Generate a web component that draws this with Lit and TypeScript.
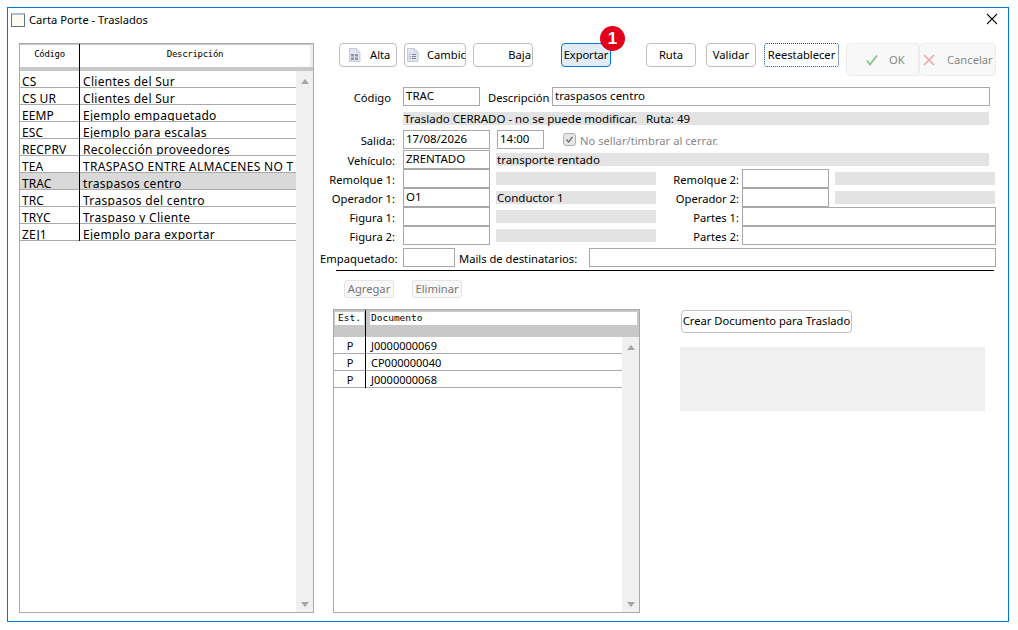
import { LitElement, html, css, svg } from "lit";
import { customElement } from "lit/decorators.js";

const LEFT_ROWS = [
  ["CS", "Clientes del Sur"],
  ["CS UR", "Clientes del Sur"],
  ["EEMP", "Ejemplo empaquetado"],
  ["ESC", "Ejemplo para escalas"],
  ["RECPRV", "Recolección proveedores"],
  ["TEA", "TRASPASO ENTRE ALMACENES NO T"],
  ["TRAC", "traspasos centro"],
  ["TRC", "Traspasos del centro"],
  ["TRYC", "Traspaso y Cliente"],
  ["ZEJ1", "Ejemplo para exportar"],
];
const DOCS = ["J0000000069", "CP000000040", "J0000000068"];

const docIcon = (lines: boolean) => html`<svg class="ic" width="15" height="16" viewBox="0 0 15 16">
  <path d="M2.5 1.5h7l3.5 3.5v9.500h-10.500z" fill="#dfe6f2" stroke="#c3cbdc"/>
  <path d="M9.500 1.500v3.500h3.500z" fill="#f6f8fc" stroke="#c3cbdc"/>
  ${lines
    ? svg`<path d="M4.500 7.500h1M4.500 9.500h1M4.500 11.500h1M7 7.500h4M7 9.500h4M7 11.500h4" stroke="#7d8594"/>`
    : svg`<path d="M4 7h3v2.500h-3zM8 7h3v2.500h-3zM4 10.500h3v2.500h-3zM8 10.500h3v2.500h-3z" fill="#8d93a0"/>`}
</svg>`;

@customElement("app-root")
export class AppRoot extends LitElement {
  static styles = css`
    :host { display: block; width: 1018px; height: 630px; background: #fff; overflow: hidden;
      font: 11.2px/16px "Noto Sans", Tahoma, sans-serif; color: #000; }
    * { box-sizing: border-box; }
    .win { margin: 7px 0 0 7px; width: 1002px; height: 615px; border: 1px solid #0078d4; display: flex; flex-direction: column; background: #fff; }
    .title { height: 24px; display: flex; align-items: center; padding: 0 10px 0 3px; flex: none; }
    .title .winic { width: 14px; height: 14px; border: 1px solid #5e7385; background: #fdfaf0; border-top: 2px solid #a9c0d8; margin-right: 4px; }
    .title .text { flex: 1; }
    .title svg { margin-bottom: 2px; }
    .body { flex: 1; display: flex; padding: 11px 0 0 11px; min-height: 0; }

    .tbl { border: 1px solid #aaa; background: #fff; display: flex; flex-direction: column; position: relative; overflow: hidden; }
    .tbl.left { width: 295px; height: 570px; flex: none; }
    .head { display: flex; font: 9px/14px "DejaVu Sans Mono", "Liberation Mono", monospace; flex: none; }
    .left .head { height: 23px; background: #fff; border-top: 1px solid #c8c8c8; border-right: 3px solid #eee; padding-top: 2px; letter-spacing: -0.3px; }
    .left .hc1 { width: 59px; text-align: center; }
    .left .hc2 { flex: 1; text-align: center; padding-left: 1px; }
    .left .sep { height: 4px; background: #c8c8c8; flex: none; }
    .vline { position: absolute; top: 0; width: 1px; background: #000; }
    .left .vline { left: 59px; height: 197px; }
    .rows { flex: 1; display: flex; min-height: 0; }
    .list { flex: 1; min-width: 0; }
    .row { display: flex; height: 17px; border-bottom: 1px solid #aaa; white-space: nowrap; overflow: hidden; }
    .row.sel { background: #d9d9d9; }
    .left .row { font-size: 12px; line-height: 11px; letter-spacing: 0.3px; padding-top: 5px; }
    .left .c1 { width: 60px; padding-left: 2px; flex: none; letter-spacing: 0.1px; }
    .left .c2 { flex: 1; padding-left: 3px; overflow: hidden; }
    .sb { width: 17px; background: #f0f0f0; flex: none; display: flex; flex-direction: column; justify-content: space-between; align-items: center; padding: 8px 0 5px; }
    .up { width: 0; height: 0; border: 4px solid transparent; border-top: 0; border-bottom: 5px solid #a6a6a6; }
    .down { width: 0; height: 0; border: 4px solid transparent; border-bottom: 0; border-top: 5px solid #a6a6a6; }

    .right { width: 677px; margin-left: 6px; flex: none; display: flex; flex-direction: column; }

    .bar { display: flex; height: 33px; padding-left: 19px; flex: none; align-items: flex-start; }
    .btn { height: 24px; border: 1px solid #bfbfbf; border-radius: 4px; background: #fff; display: flex; align-items: center; justify-content: center; white-space: nowrap; overflow: hidden; flex: none; position: relative; }
    .ic { flex: none; }
    .b-alta { width: 58px; justify-content: flex-start; padding-left: 7px; }
    .b-alta .lb { margin-left: 8px; }
    .b-cambio { width: 62px; margin-left: 7px; justify-content: flex-start; }
    .b-cambio .lb { margin-left: 7px; }
    .b-baja { width: 60px; margin-left: 7px; justify-content: flex-end; padding-right: 1px; }
    .b-exp { width: 50px; margin-left: 28px; background: #e1ecf6; border-color: #0078d4; letter-spacing: -0.1px; }
    .b-ruta { width: 50px; margin-left: 35px; }
    .b-val { width: 50px; margin-left: 10px; }
    .b-res { width: 75px; margin-left: 8px; border: 1px dotted #0b4f9e; border-radius: 3px; }
    .big { height: 33px; border: 1px solid #ececec; background: #f8f8f8; color: #888; border-radius: 4px; justify-content: flex-start; }
    .big svg { flex: none; }
    .b-ok { width: 73px; margin-left: 7px; border-radius: 4px 0 0 4px; padding-left: 18px; }
    .b-ok svg { margin-right: 10px; }
    .b-can { width: 77px; padding-left: 3px; }
    .b-can svg { margin-right: 12px; }
    .wrap { position: relative; flex: none; display: flex; }
    .badge { position: absolute; right: -14px; top: -17px; width: 25px; height: 25px; border-radius: 50%; background: #e2001a; color: #fff; font: bold 17px/25px "Liberation Sans", sans-serif; text-align: center; }

    .f { display: flex; align-items: flex-start; flex: none; white-space: nowrap; height: 19px; }
    .lab { width: 75px; text-align: right; flex: none; margin-top: 3px; }
    .lab.cod { width: 71px; margin-right: 4px; }
    .in { height: 19px; border: 1px solid #a8a8a8; background: #fff; padding-left: 2px; line-height: 16px; flex: none; margin-left: 8px; overflow: hidden; font-size: 11.5px; }
    .ro { height: 13px; background: #e3e3e3; line-height: 13px; padding-left: 1px; flex: none; white-space: nowrap; margin-top: 3px; font-size: 11.5px; }
    .r1 { margin-top: 11px; }
    .w77 { width: 77px; }
    .w87 { width: 87px; }
    .w47 { width: 47px; margin-left: 7px; }
    .wd { width: 438px; margin-left: 2px; }
    .ld { margin: 3px 0 0 8px; width: 62px; flex: none; }
    .msg { margin: 6px 0 0 83px; width: 586px; padding-left: 1px; }
    .r2 { margin-top: 5px; margin-bottom: 1px; }
    .chk { width: 13px; height: 13px; margin: 3px 4px 0 19px; border: 1px solid #b0b0b0; border-radius: 3px; background: #e6e6e6; display: block; flex: none; }
    .dis { color: #888; margin-top: 3px; }
    .ro1 { width: 493px; margin-left: 6px; }
    .ro2 { width: 160px; margin-left: 6px; }
    .l2 { width: 83px; text-align: right; flex: none; margin-top: 3px; }
    .in2 { margin-left: 3px; width: 87px; }
    .p { margin-left: 3px; width: 254px; }
    .r4 { margin-top: 3px; }
    .lab-e { width: 77px; text-align: right; flex: none; margin-top: 3px; letter-spacing: 0.05px; }
    .w52 { width: 52px; margin-left: 6px; }
    .lm { margin: 3px 0 0 4px; width: 118px; flex: none; }
    .wm { width: 407px; margin-left: 12px; }
    .hr { height: 1px; background: #000; margin: 3px 0 0 16px; width: 658px; flex: none; }
    .acts { display: flex; margin: 9px 0 0 24px; flex: none; }
    .sm { height: 18px; border: 1px solid #e4e4e4; border-radius: 3px; background: #f8f8f8; color: #777; display: flex; align-items: center; justify-content: center; flex: none; }
    .a1 { width: 50px; }
    .a2 { width: 50px; margin-left: 18px; }
    .lower { display: flex; margin: 11px 0 0 13px; flex: 1; min-height: 0; }
    .tbl.docs { width: 307px; height: 304px; flex: none; }
    .docs .head { height: 15px; padding: 2px 0 0 1px; background: #c8c8c8; font-size: 9.5px; line-height: 12px; }
    .docs .hc1 { width: 29px; background: #fff; text-align: center; }
    .docs .hc2 { width: 267px; margin-left: 6px; background: #fff; padding-left: 1px; }
    .docs .sep { height: 12px; background: #c8c8c8; flex: none; }
    .docs .vline { left: 31px; height: 78px; }
    .docs .row { padding-top: 2px; line-height: 13px; font-size: 11px; }
    .docs .c1 { width: 32px; text-align: center; flex: none; }
    .docs .c2 { flex: 1; padding-left: 5px; }
    .side { margin-left: 40px; display: flex; flex-direction: column; flex: none; align-items: flex-start; }
    .crear { width: 171px; height: 23px; margin: 1px 0 0 1px; padding-bottom: 1px; }
    .gbox { width: 305px; height: 64px; background: #f0f0f0; margin-top: 14px; }
  `;

  private leftPart(label: string, value = "", ro = "") {
    return html`<span class="lab">${label}</span><span class="in w87">${value}</span><span class="ro ro2">${ro}</span>`;
  }

  render() {
    return html`<div class="win">
      <div class="title">
        <span class="winic"></span><span class="text">Carta Porte - Traslados</span>
        <svg width="12" height="12" viewBox="0 0 12 12"><path d="M1 1l10 10M11 1l-10 10" stroke="#111" stroke-width="1.100" fill="none"/></svg>
      </div>
      <div class="body">
        <div class="tbl left">
          <div class="head"><span class="hc1">Código</span><span class="hc2">Descripción</span></div>
          <div class="sep"></div>
          <div class="rows">
            <div class="list">
              ${LEFT_ROWS.map(([a, b]) => html`<div class="row ${a === "TRAC" ? "sel" : ""}"><span class="c1">${a}</span><span class="c2">${b}</span></div>`)}
            </div>
            <div class="sb"><span class="up"></span><span class="down"></span></div>
          </div>
          <span class="vline"></span>
        </div>
        <div class="right">
          <div class="bar">
            <div class="btn b-alta">${docIcon(false)}<span class="lb">Alta</span></div>
            <div class="btn b-cambio">${docIcon(true)}<span class="lb">Cambio</span></div>
            <div class="btn b-baja"><span class="lb">Baja</span></div>
            <div class="wrap"><div class="btn b-exp">Exportar</div><span class="badge">1</span></div>
            <div class="btn b-ruta">Ruta</div>
            <div class="btn b-val">Validar</div>
            <div class="btn b-res">Reestablecer</div>
            <div class="btn big b-ok">
              <svg width="14" height="12" viewBox="0 0 14 12"><path d="M2 6.500l3 4 7-9" stroke="#8cc88c" stroke-width="2" fill="none"/></svg>OK
            </div>
            <div class="btn big b-can">
              <svg width="12" height="12" viewBox="0 0 12 12"><path d="M1 1l10 10M11 1l-10 10" stroke="#e8a8a8" stroke-width="1.600" fill="none"/></svg>Cancelar
            </div>
          </div>

          <div class="f r1">
            <span class="lab cod">Código</span><span class="in w77">TRAC</span>
            <span class="ld">Descripción</span><span class="in wd">traspasos centro</span>
          </div>
          <div class="ro msg">Traslado CERRADO - no se puede modificar. &nbsp;&nbsp;Ruta: 49</div>
          <div class="f r2">
            <span class="lab">Salida:</span><span class="in w87">17/08/2026</span><span class="in w47">14:00</span>
            <svg class="chk" viewBox="0 0 13 13"><path d="M3 6.500l2.500 3 4.500-6" stroke="#666" stroke-width="1.500" fill="none"/></svg>
            <span class="dis">No sellar/timbrar al cerrar.</span>
          </div>
          <div class="f"><span class="lab">Vehículo:</span><span class="in w87">ZRENTADO</span><span class="ro ro1">transporte rentado</span></div>
          <div class="f">
            ${this.leftPart("Remolque 1:")}
            <span class="l2">Remolque 2:</span><span class="in in2"></span><span class="ro ro2"></span>
          </div>
          <div class="f">
            ${this.leftPart("Operador 1:", "O1", "Conductor 1")}
            <span class="l2">Operador 2:</span><span class="in in2"></span><span class="ro ro2"></span>
          </div>
          <div class="f">
            ${this.leftPart("Figura 1:")}
            <span class="l2">Partes 1:</span><span class="in p"></span>
          </div>
          <div class="f">
            ${this.leftPart("Figura 2:")}
            <span class="l2">Partes 2:</span><span class="in p"></span>
          </div>
          <div class="f r4">
            <span class="lab-e">Empaquetado:</span><span class="in w52"></span>
            <span class="lm">Mails de destinatarios:</span><span class="in wm"></span>
          </div>
          <div class="hr"></div>
          <div class="acts"><div class="sm a1">Agregar</div><div class="sm a2">Eliminar</div></div>
          <div class="lower">
            <div class="tbl docs">
              <div class="head"><span class="hc1">Est.</span><span class="hc2">Documento</span></div>
              <div class="sep"></div>
              <div class="rows">
                <div class="list">
                  ${DOCS.map((d) => html`<div class="row"><span class="c1">P</span><span class="c2">${d}</span></div>`)}
                </div>
                <div class="sb"><span class="up"></span><span class="down"></span></div>
              </div>
              <span class="vline"></span>
            </div>
            <div class="side">
              <div class="btn crear">Crear Documento para Traslado</div>
              <div class="gbox"></div>
            </div>
          </div>
        </div>
      </div>
    </div>`;
  }
}
